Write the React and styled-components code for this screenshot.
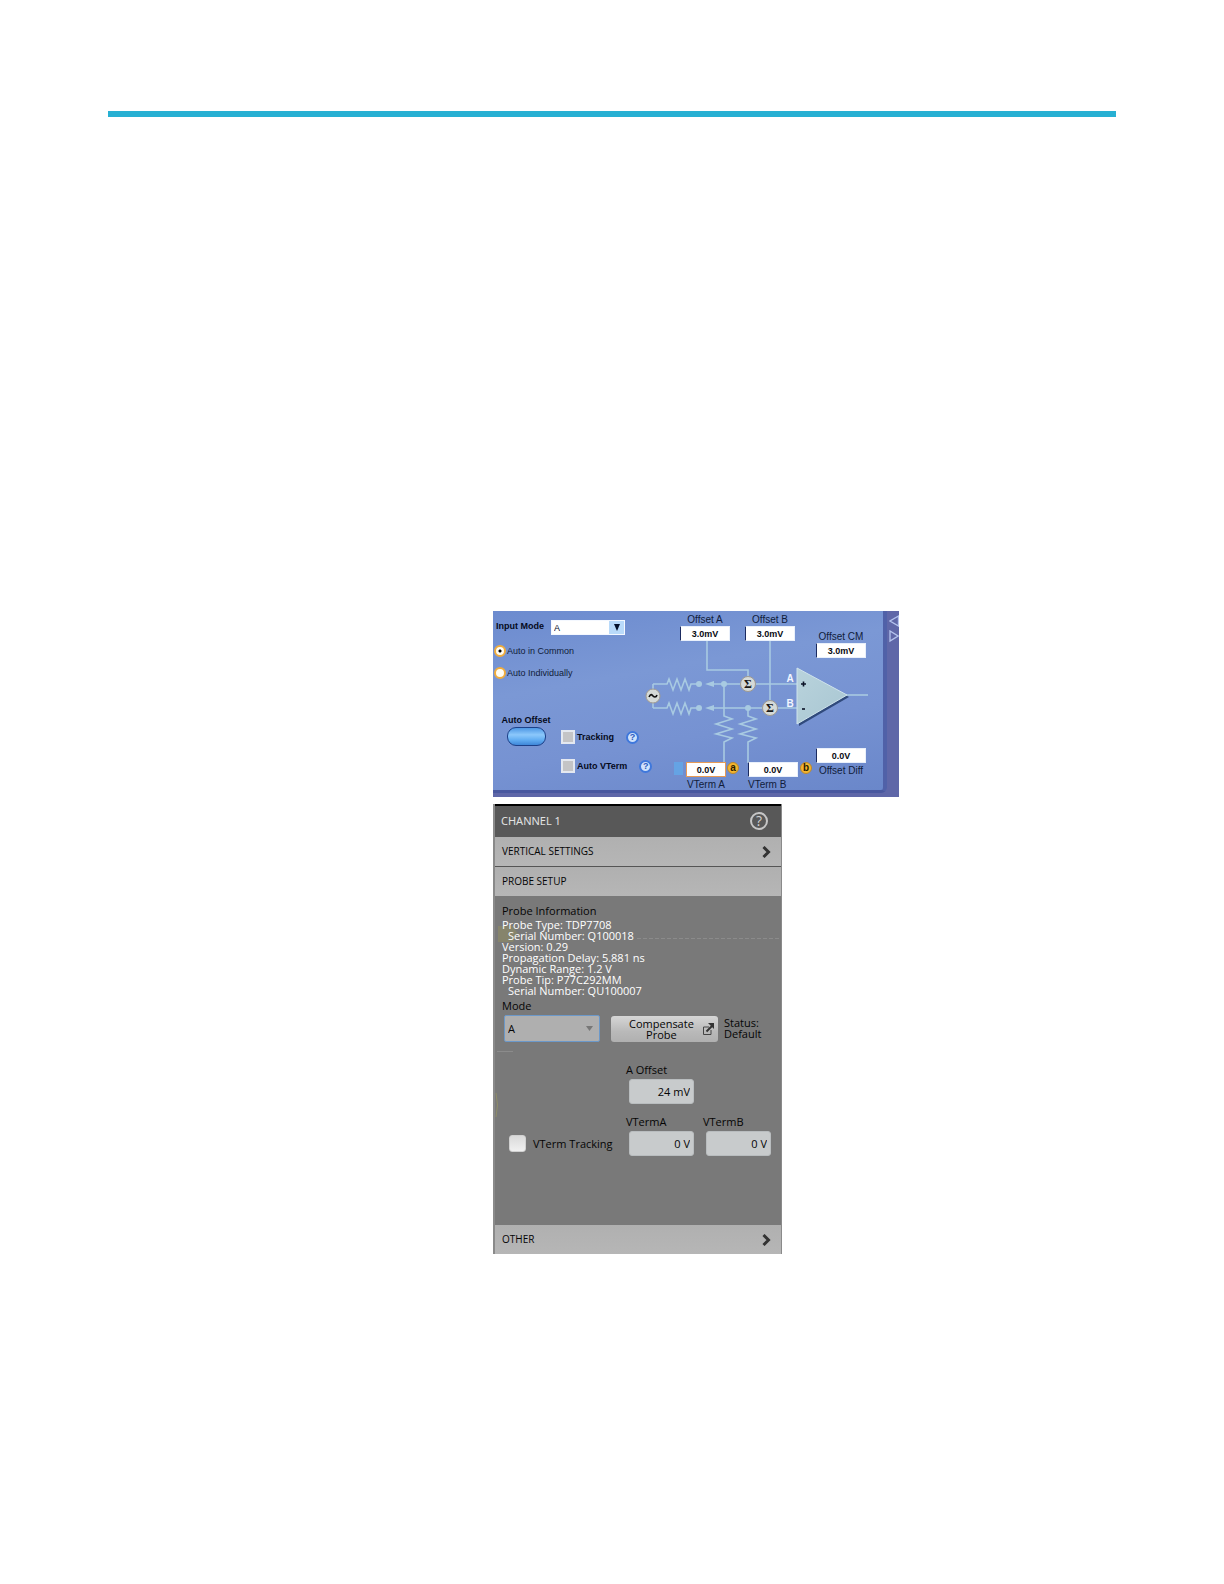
import React from "react";
import styled, { createGlobalStyle } from "styled-components";

const GlobalStyle = createGlobalStyle`
  *, *::before, *::after { box-sizing: border-box; }
  body { margin: 0; background: #fff; }
  button, input, select { font: inherit; color: inherit; margin: 0; }
`;

const Page = styled.main`
  min-height: 100vh;
  padding: 111px 108px;
`;

const Rule = styled.hr`
  height: 6px;
  margin: 0 0 494px;
  border: 0;
  background: #27b0d3;
`;

const Figures = styled.div`
  display: flex;
  flex-direction: column;
  gap: 7px;
  margin-left: 385px;
`;

/* ---------- Input mode panel ---------- */

const ModePanel = styled.section`
  display: flex;
  width: 100%;
  max-width: 406px;
  background: #5f67a8;
  font: 9px/12px "Liberation Sans", Arial, sans-serif;
  color: #101c3a;
`;

const ModeSurface = styled.div`
  display: flex;
  flex: 1;
  min-width: 0;
  height: 182px;
  margin-bottom: 4px;
  border-right: 4px solid #5061a8;
  border-bottom: 3px solid #49589f;
  border-bottom-right-radius: 6px;
  background: linear-gradient(170deg, #6c8bcf 0%, #7b98d5 35%, #7692d2 65%, #6a87ca 100%);
`;

const SideStrip = styled.div`
  display: flex;
  flex: 0 0 12px;
  flex-direction: column;
  align-items: flex-end;
  padding-top: 3px;
  gap: 3px;
`;

const StepButton = styled.button`
  display: flex;
  width: 10px;
  height: 13px;
  padding: 0;
  border: 0;
  background: none;
`;

const Controls = styled.div`
  flex: 0 0 145px;
  min-width: 0;
  padding: 9px 0 0 1px;
`;

const ModeRow = styled.div`
  display: flex;
  align-items: flex-start;
  gap: 7px;
  margin-bottom: 9px;
  padding-left: 2px;
  font-weight: bold;
  white-space: nowrap;
  color: #050a1c;
`;

const SelectWrap = styled.span`
  position: relative;
  display: block;
  width: ${(p) => p.$width}px;
`;

const ModeSelect = styled.select`
  display: block;
  appearance: none;
  width: 100%;
  height: 15px;
  padding: 0 18px 0 2px;
  border: 1px solid #f4f8ff;
  border-radius: 0;
  background: linear-gradient(to right, #fff 57px, #b9dafa 57px);
  font-weight: normal;
`;

const SelectArrow = styled.svg`
  position: absolute;
  top: ${(p) => p.$top}px;
  right: ${(p) => p.$right}px;
  pointer-events: none;
`;

const RadioRow = styled.label`
  display: flex;
  align-items: center;
  gap: 1px;
  height: 14px;
  margin-bottom: 8px;
  white-space: nowrap;
`;

const Radio = styled.input`
  appearance: none;
  width: 12px;
  height: 12px;
  margin: 0;
  border: 2px solid #f0ac3c;
  border-radius: 50%;
  background: #fffdf4;
  &:checked {
    background: radial-gradient(circle, #000 0 1px, #fffdf4 2px);
  }
`;

const OffsetRow = styled.div`
  display: flex;
  gap: 7px;
  margin-top: 34px;
  padding-left: 4px;
  font-weight: bold;
  color: #050a1c;
`;

const AutoOffset = styled.div`
  display: flex;
  flex: 0 0 56px;
  flex-direction: column;
  align-items: center;
  gap: 1px;
  white-space: nowrap;
`;

const PillButton = styled.button`
  width: 39px;
  height: 19px;
  border: 1px solid #1c4088;
  border-radius: 9px;
  background: linear-gradient(#4e97e4, #8cc8fb 40%, #62adf2 70%, #3f87d8);
`;

const Checks = styled.div`
  display: flex;
  flex-direction: column;
  gap: 15px;
  padding-top: 16px;
`;

const CheckRow = styled.div`
  display: flex;
  align-items: center;
  gap: 12px;
  height: 14px;
  white-space: nowrap;
`;

const CheckLabel = styled.label`
  display: flex;
  align-items: center;
  gap: 2px;
`;

const PanelCheck = styled.input`
  appearance: none;
  width: 14px;
  height: 14px;
  border: 2px solid #e4e8f0;
  background: #c4c4c6;
  &:checked { background: #4d6ca8; }
`;

const HelpButton = styled.button`
  flex: 0 0 13px;
  height: 13px;
  padding: 0;
  border: 2px solid #3f78dc;
  border-radius: 50%;
  background: #cfe2fb;
  font-weight: bold;
  line-height: 9px;
  color: #2b5cc0;
`;

/* The circuit is a free canvas: fields and badges sit on its wires. */
const Circuit = styled.div`
  position: relative;
  flex: 0 0 245px;
  font-size: 10px;
  pointer-events: none;
  & input, & label { pointer-events: auto; }
`;

const Schematic = styled.svg`
  display: block;
`;

const Node = styled.div`
  position: absolute;
  left: ${(p) => p.$x}px;
  top: ${(p) => p.$y}px;
  display: flex;
  flex-direction: ${(p) => (p.$below ? "column-reverse" : "column")};
  align-items: ${(p) => p.$align || "center"};
  gap: ${(p) => (p.$below ? 2 : 0)}px;
  width: ${(p) => p.$w}px;
  white-space: nowrap;
`;

const NodeInput = styled.input`
  width: 100%;
  height: 15px;
  padding: 0;
  border: 1px solid ${(p) => (p.$active ? "#e79a55" : "#e9f0fb")};
  border-left: 1px solid ${(p) => (p.$active ? "#e79a55" : "#1b2b60")};
  border-radius: 0;
  background: #fff;
  font-size: 9px;
  font-weight: bold;
  text-align: center;
  color: #0a0a12;
`;

const NodeLabel = styled.label`
  display: block;
  height: 12px;
`;

const KnobBadge = styled.span`
  position: absolute;
  left: ${(p) => p.$x}px;
  top: 151px;
  width: 12px;
  height: 12px;
  border: 1px solid #b9882f;
  border-radius: 50%;
  background: #f4b52e;
  font-weight: bold;
  line-height: 9px;
  text-align: center;
  color: #2a1c00;
`;

const circuitFields = [
  { id: "offset-a", label: "Offset A", value: "3.0mV", x: 42, y: 3, w: 50 },
  { id: "offset-b", label: "Offset B", value: "3.0mV", x: 107, y: 3, w: 50 },
  { id: "offset-cm", label: "Offset CM", value: "3.0mV", x: 178, y: 20, w: 50 },
  { id: "offset-diff", label: "Offset Diff", value: "0.0V", x: 178, y: 137, w: 50, below: true },
  { id: "vterm-a", label: "VTerm A", value: "0.0V", x: 48, y: 151, w: 40, below: true, active: true },
  { id: "vterm-b", label: "VTerm B", value: "0.0V", x: 110, y: 151, w: 50, below: true, align: "flex-start" },
];

const Help = ({ topic }) => (
  <HelpButton type="button" aria-label={`Help for ${topic}`}>?</HelpButton>
);

function CircuitDrawing() {
  const zig = (y) => `M15 ${y}H29l2-5 4 11 4-11 4 11 4-11 4 11 2-6h8`;
  const drop = (x, y) => `M${x} ${y}V105l8 3-16 5 16 5-16 5 16 4-8 4V152`;
  return (
    <Schematic width="245" height="179" viewBox="0 0 245 179" aria-hidden="true">
      <defs>
        <linearGradient id="amp" x1="0" y1="0" x2="1" y2="1">
          <stop offset="0" stopColor="#b9d3dc" />
          <stop offset="1" stopColor="#a8c6d2" />
        </linearGradient>
      </defs>
      <g fill="none" stroke="#a8cae2" strokeWidth="1.6">
        <path d="M15 78V73" />
        <path d="M15 92V97" />
        <path d={zig(73)} />
        <path d={zig(97)} />
        <path d="M76 73H159M76 97H159" />
        <path d="M69 30V59H110V66" />
        <path d="M132 30V90" />
        <path d={drop(86, 73)} />
        <path d={drop(110, 97)} />
        <path d="M208 84H230" />
      </g>
      <g fill="#a8cae2">
        <circle cx="61" cy="73" r="3" />
        <circle cx="61" cy="97" r="3" />
        <path d="M67 73l9-3v6zM67 97l9-3v6z" />
        <circle cx="86" cy="73" r="3" />
        <circle cx="110" cy="97" r="3" />
        <rect x="36" y="151" width="9" height="13" fill="#65a3e4" />
      </g>
      <path d="M161 59L211 86 161 115z" fill="#304a7c" />
      <path d="M159 57L209 84 159 113z" fill="url(#amp)" stroke="#cfe3ec" />
      <g fill="#d5dad8" stroke="#a09a90">
        <circle cx="15" cy="85" r="7" />
        <circle cx="110" cy="73" r="7.5" />
        <circle cx="132" cy="97" r="7.5" />
      </g>
      <path d="M11 86c2-4 3-2 4-1s3 2 4-1" fill="none" stroke="#111" strokeWidth="1.6" />
      <g fontFamily="Liberation Serif, serif" fontWeight="bold" fontSize="12" textAnchor="middle" fill="#1a1a1a">
        <text x="110" y="77">Σ</text>
        <text x="132" y="101">Σ</text>
      </g>
      <g fontWeight="bold" fontSize="10" textAnchor="middle" fill="#f2f6ff">
        <text x="152" y="71">A</text>
        <text x="152" y="96">B</text>
      </g>
      <g stroke="#0b1226" strokeWidth="1.6">
        <path d="M163 73h5M165.500 70.500v5" />
        <path d="M164 98h3" />
      </g>
    </Schematic>
  );
}

function InputModePanel() {
  return (
    <ModePanel aria-label="Input mode">
      <ModeSurface>
        <Controls>
          <ModeRow>
            <label htmlFor="input-mode">Input Mode</label>
            <SelectWrap $width={74}>
              <ModeSelect id="input-mode" defaultValue="A">
                <option>A</option>
                <option>B</option>
              </ModeSelect>
              <SelectArrow $top={4} $right={5} width="6" height="7" viewBox="0 0 6 7">
                <path d="M0 0h6L3 7z" fill="#06122c" />
              </SelectArrow>
            </SelectWrap>
          </ModeRow>
          <RadioRow>
            <Radio type="radio" name="auto" defaultChecked />
            Auto in Common
          </RadioRow>
          <RadioRow>
            <Radio type="radio" name="auto" />
            Auto Individually
          </RadioRow>
          <OffsetRow>
            <AutoOffset>
              <span id="auto-offset">Auto Offset</span>
              <PillButton type="button" aria-labelledby="auto-offset" />
            </AutoOffset>
            <Checks>
              <CheckRow>
                <CheckLabel><PanelCheck type="checkbox" />Tracking</CheckLabel>
                <Help topic="Tracking" />
              </CheckRow>
              <CheckRow>
                <CheckLabel><PanelCheck type="checkbox" />Auto VTerm</CheckLabel>
                <Help topic="Auto VTerm" />
              </CheckRow>
            </Checks>
          </OffsetRow>
        </Controls>
        <Circuit>
          <CircuitDrawing />
          {circuitFields.map((f) => (
            <Node key={f.id} $x={f.x} $y={f.y} $w={f.w} $below={f.below} $align={f.align}>
              <NodeLabel htmlFor={f.id}>{f.label}</NodeLabel>
              <NodeInput id={f.id} defaultValue={f.value} $active={f.active} />
            </Node>
          ))}
          <KnobBadge $x={89}>a</KnobBadge>
          <KnobBadge $x={162}>b</KnobBadge>
        </Circuit>
      </ModeSurface>
      <SideStrip>
        <StepButton type="button" aria-label="Previous">
          <svg width="10" height="13" viewBox="0 0 10 13"><path d="M9.500 2v10L1 7z" fill="none" stroke="#b4c3ee" strokeWidth="1.3" /></svg>
        </StepButton>
        <StepButton type="button" aria-label="Next">
          <svg width="10" height="13" viewBox="0 0 10 13"><path d="M1 1v10l8-5z" fill="none" stroke="#b4c3ee" strokeWidth="1.3" /></svg>
        </StepButton>
      </SideStrip>
    </ModePanel>
  );
}

/* ---------- Channel panel ---------- */

const ChannelPanel = styled.section`
  width: 100%;
  max-width: 289px;
  border: solid #8a8a8a;
  border-width: 0 1px 0 2px;
  background: #797979;
  font: 11px/11px "Open Sans", "Noto Sans", sans-serif;
  color: #050505;
`;

const ChannelHeader = styled.header`
  display: flex;
  align-items: center;
  justify-content: space-between;
  height: 33px;
  padding: 0 13px 2px 6px;
  border-top: 2px solid #000;
  background: #585858;
  color: #e2e2e2;
`;

const Title = styled.h2`
  margin: 0;
  font-family: "Noto Sans", "Open Sans", sans-serif;
  font-size: 11px;
  font-weight: 400;
`;

const RoundHelp = styled.button`
  width: 18px;
  height: 18px;
  padding: 0;
  border: 2px solid #c6c6c6;
  border-radius: 50%;
  background: none;
  font-size: 14px;
  line-height: 14px;
  color: #d0d0d0;
`;

const SectionButton = styled.button`
  display: flex;
  align-items: center;
  justify-content: space-between;
  width: 100%;
  height: ${(p) => p.$height}px;
  padding: 0 10px 0 7px;
  border: 0;
  border-bottom: ${(p) => (p.$divided ? "1px solid #555" : "0")};
  background: linear-gradient(#b0b0b0, #b6b6b6);
  font-size: 10px;
  font-weight: 500;
`;

const ProbeBody = styled.div`
  position: relative;
  height: 329px;
  padding: 9px 8px 0 7px;
`;

const TraceBackdrop = styled.svg`
  position: absolute;
  top: 0;
  left: 0;
  pointer-events: none;
`;

const ProbeHeading = styled.h3`
  margin: 0 0 3px;
  font-size: 11px;
  font-weight: 400;
`;

const ProbeFacts = styled.ul`
  position: relative;
  margin: 0 0 4px;
  padding: 0;
  list-style: none;
  color: #fff;
`;

const Fact = styled.li`
  padding-left: ${(p) => (p.$nested ? 6 : 0)}px;
`;

const ModeBlock = styled.div`
  display: flex;
  align-items: flex-end;
  padding-left: 2px;
`;

const ProbeModeSelect = styled.select`
  display: block;
  appearance: none;
  width: 100%;
  height: 27px;
  padding: 0 16px 0 3px;
  border: 1px solid #6b98c9;
  border-radius: 2px;
  background: #afafaf;
`;

const Compensate = styled.button`
  display: flex;
  align-items: center;
  justify-content: space-between;
  width: 107px;
  height: 26px;
  margin: 0 6px 0 11px;
  padding: 0 4px 0 18px;
  border: 0;
  border-radius: 3px;
  background: linear-gradient(#d6d6d6, #b9b9b9 60%, #b0b0b0);
`;

const Status = styled.p`
  margin: 0 0 3px;
`;

const Terms = styled.div`
  display: grid;
  grid-template-columns: 107px 67px 67px;
  column-gap: 10px;
  row-gap: 12px;
  align-items: end;
  margin-top: 22px;
  padding-left: 7px;
`;

const TermField = styled.div`
  grid-column: ${(p) => p.$col};
`;

const TermLabel = styled.label`
  display: block;
  margin-bottom: 4px;
`;

const TermInput = styled.input`
  display: block;
  width: 65px;
  height: 25px;
  margin-left: 3px;
  padding: 0 3px;
  border: 1px solid #b9bdbf;
  border-radius: 3px;
  background: #c8cbcc;
  text-align: right;
`;

const Tracking = styled.label`
  grid-column: 1;
  display: flex;
  align-items: center;
  gap: 7px;
  height: 25px;
  white-space: nowrap;
`;

const TrackingCheck = styled.input`
  appearance: none;
  flex: 0 0 17px;
  height: 17px;
  border: 1px solid #d0d0d0;
  border-radius: 3px;
  background: linear-gradient(#dadada, #f0f0f0);
  &:checked { background: #4f86c0; }
`;

const facts = [
  { text: "Probe Type: TDP7708" },
  { text: "Serial Number: Q100018", nested: true },
  { text: "Version: 0.29" },
  { text: "Propagation Delay: 5.881 ns" },
  { text: "Dynamic Range: 1.2 V" },
  { text: "Probe Tip: P77C292MM" },
  { text: "Serial Number: QU100007", nested: true },
];

const Chevron = () => (
  <svg width="9" height="12" viewBox="0 0 9 12" aria-hidden="true">
    <path d="M1.500 1l5 5-5 5" fill="none" stroke="#333" strokeWidth="3" />
  </svg>
);

const PopOutIcon = () => (
  <svg width="11" height="12" viewBox="0 0 11 12" aria-hidden="true">
    <path d="M6 4H.500v7.500H8V7" fill="none" stroke="#444" />
    <path d="M3.500 8.500L9 3" stroke="#333" strokeWidth="2" />
    <path d="M5 0h6v6z" fill="#333" />
  </svg>
);

const Term = ({ id, label, value, col }) => (
  <TermField $col={col}>
    <TermLabel htmlFor={id}>{label}</TermLabel>
    <TermInput id={id} defaultValue={value} />
  </TermField>
);

function ChannelSettings() {
  return (
    <ChannelPanel aria-label="Channel 1">
      <ChannelHeader>
        <Title>CHANNEL 1</Title>
        <RoundHelp type="button" aria-label="Help">?</RoundHelp>
      </ChannelHeader>
      <SectionButton type="button" $height={30} $divided>VERTICAL SETTINGS<Chevron /></SectionButton>
      <SectionButton type="button" $height={29}>PROBE SETUP</SectionButton>
      <ProbeBody>
        <TraceBackdrop width="286" height="329" viewBox="0 0 286 329" aria-hidden="true">
          <path d="M3 30h15l5 8-5 8H3z" fill="#86846c" />
          <path d="M142 42.500H286" stroke="#8b8b8b" strokeDasharray="4 2" />
          <path d="M2 155.500h16" stroke="#8b8b8b" />
          <path d="M1 197q3 12 0 24" fill="none" stroke="#8f8d68" />
        </TraceBackdrop>
        <ProbeHeading>Probe Information</ProbeHeading>
        <ProbeFacts>
          {facts.map((f) => (
            <Fact key={f.text} $nested={f.nested}>{f.text}</Fact>
          ))}
        </ProbeFacts>
        <TermLabel htmlFor="probe-mode">Mode</TermLabel>
        <ModeBlock>
          <SelectWrap $width={96}>
            <ProbeModeSelect id="probe-mode" defaultValue="A">
              <option>A</option>
              <option>B</option>
            </ProbeModeSelect>
            <SelectArrow $top={11} $right={7} width="7" height="5" viewBox="0 0 7 5">
              <path d="M0 0h7L3.500 5z" fill="#777" />
            </SelectArrow>
          </SelectWrap>
          <Compensate type="button">
            <span>Compensate<br />Probe</span>
            <PopOutIcon />
          </Compensate>
          <Status>Status:<br />Default</Status>
        </ModeBlock>
        <Terms>
          <Term id="a-offset" label="A Offset" value="24 mV" col={2} />
          <Tracking><TrackingCheck type="checkbox" />VTerm Tracking</Tracking>
          <Term id="term-a" label="VTermA" value="0 V" col={2} />
          <Term id="term-b" label="VTermB" value="0 V" col={3} />
        </Terms>
      </ProbeBody>
      <SectionButton type="button" $height={29}>OTHER<Chevron /></SectionButton>
    </ChannelPanel>
  );
}

export default function App() {
  return (
    <>
      <GlobalStyle />
      <Page>
        <Rule />
        <Figures>
          <InputModePanel />
          <ChannelSettings />
        </Figures>
      </Page>
    </>
  );
}
